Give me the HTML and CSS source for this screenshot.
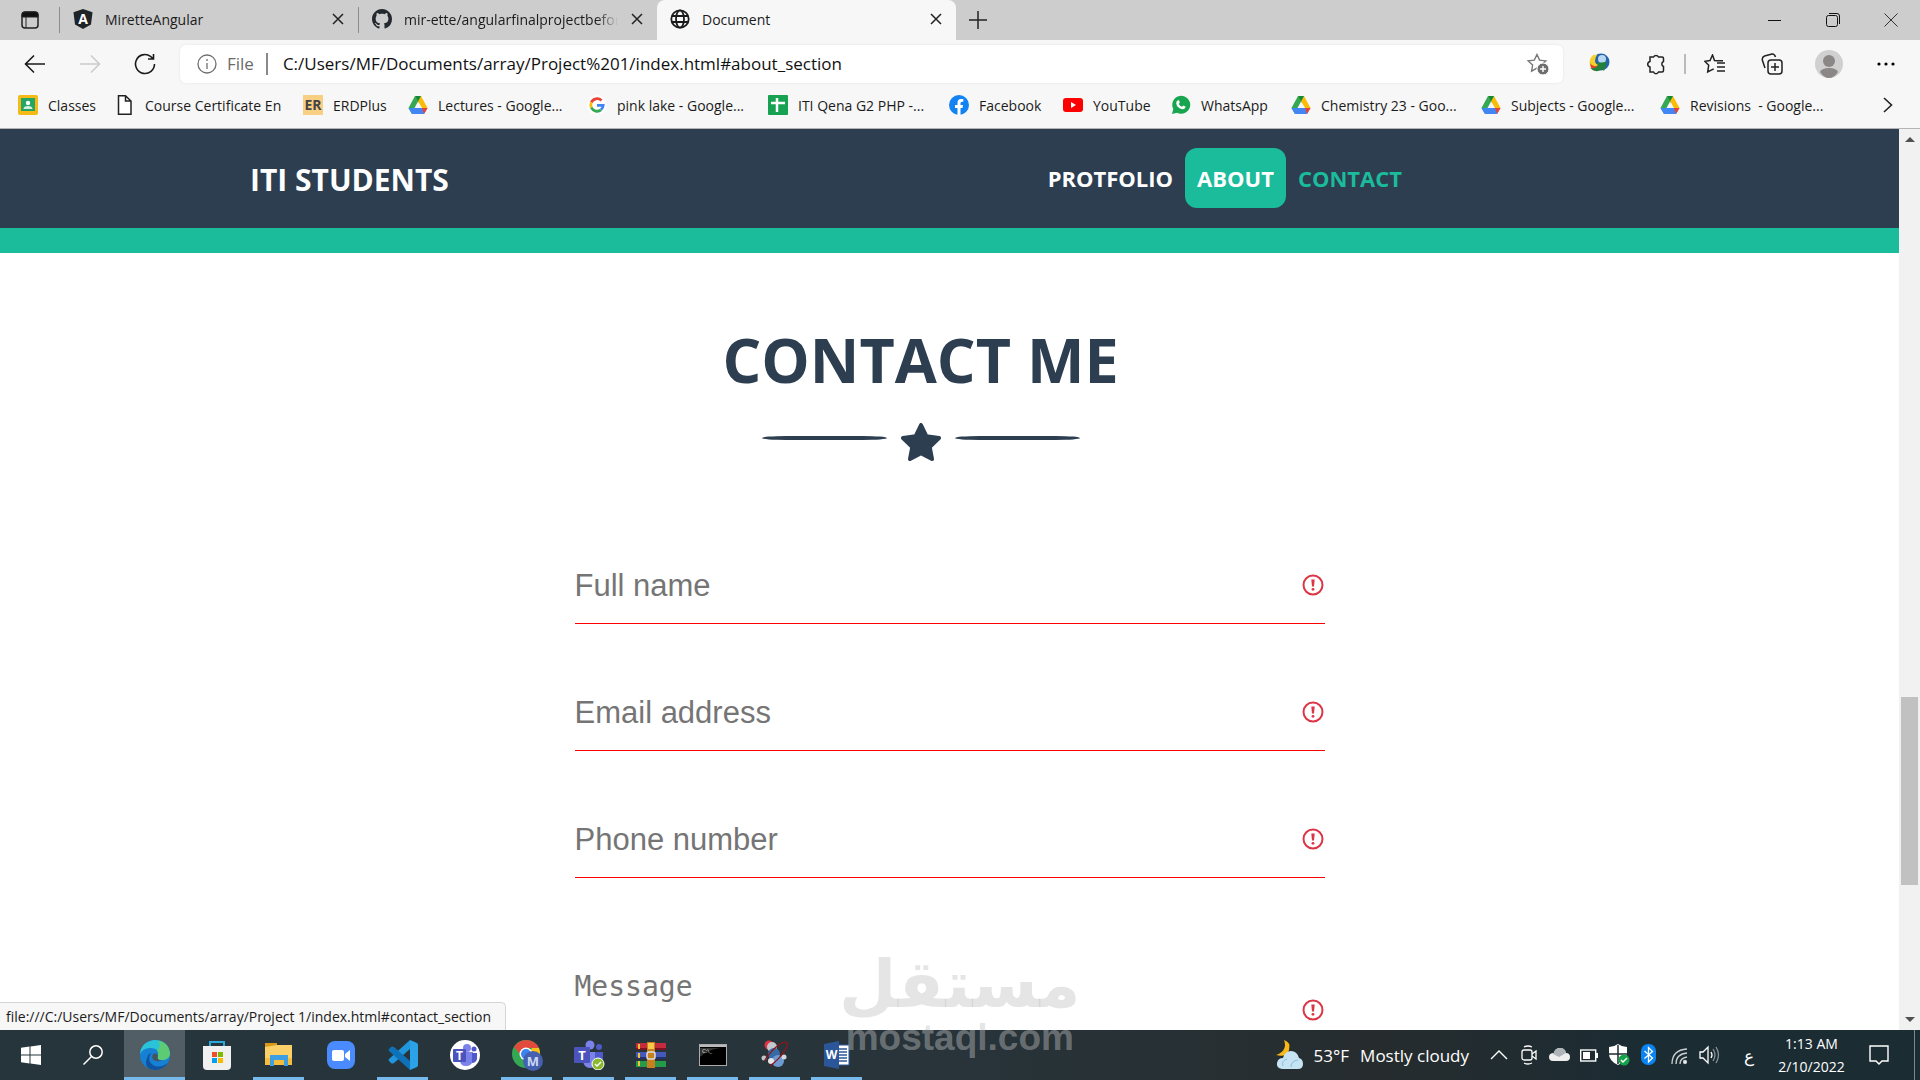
FILE: index.html
```html
<!DOCTYPE html>
<html lang="en">
<head>
  <meta charset="UTF-8" />
  <meta name="viewport" content="width=device-width, initial-scale=1.0"/>
  <title>Document</title>
  <link rel="stylesheet" href="styles.css">
</head>
<body>
  <svg class="defs" aria-hidden="true">
    <symbol id="drive" viewBox="0 0 20 20">
      <path fill="#34a853" d="M7 1h3l2 4-7 13-1 1L.500 13z"/>
      <path fill="#fbbc04" d="M7 1h6l6.500 12H14z"/>
      <path fill="#4285f4" d="M.500 13l3.500 6h12l3.500-6z"/>
      <path fill="#ea4335" d="M14 13h5.500L16 19z"/>
      <path fill="#0f8a3c" d="M7 1h6l-3 5.500z"/>
      <path fill="#f7f7f7" d="M10 6.500l3.500 6.500h-7z"/>
    </symbol>
    <symbol id="alert" viewBox="0 0 22 22">
      <circle cx="11" cy="11" r="9.500" fill="none" stroke="#dc3545" stroke-width="2"/>
      <path d="M9.300 5.500h3.400L12 12.500h-2z" fill="#dc3545"/>
      <circle cx="11" cy="15.300" r="1.400" fill="#dc3545"/>
    </symbol>
    <symbol id="x" viewBox="0 0 12 12">
      <path d="M1 1l10 10M11 1L1 11" fill="none" stroke="#222" stroke-width="1.500"/>
    </symbol>
  </svg>

  <!-- tabs -->
  <div class="tab-strip">
    <button class="tab-actions" aria-label="Tab actions">
      <svg width="18" height="18" viewBox="0 0 18 18"><rect x="1" y="1" width="16" height="16" rx="3" fill="none" stroke="#222" stroke-width="1.500"/><path d="M1 6V4a3 3 0 0 1 3-3h10a3 3 0 0 1 3 3v2zM5 6v11" stroke="#222" fill="#111"/></svg>
    </button>
    <div class="tab">
      <svg width="20" height="20" viewBox="0 0 20 20"><path d="M10 0l9.500 3.300L18 15.500 10 20l-8-4.500L.500 3.300z" fill="#1e2428"/><text class="logo-letter" x="10" y="15" font-size="14">A</text></svg>
      <span class="tab-title">MiretteAngular</span>
      <button class="tab-close" aria-label="Close tab"><svg width="12" height="12"><use href="#x"/></svg></button>
    </div>
    <div class="tab">
      <svg width="20" height="20" viewBox="0 0 16 16"><path fill="#24292f" d="M8 0C3.580 0 0 3.580 0 8c0 3.540 2.290 6.530 5.470 7.590.4.070.550-.170.550-.380 0-.190-.010-.820-.010-1.490-2.010.370-2.530-.490-2.690-.940-.090-.230-.480-.940-.820-1.130-.280-.150-.680-.520-.010-.530.630-.010 1.080.580 1.230.820.720 1.210 1.870.870 2.330.660.070-.520.280-.870.510-1.070-1.780-.200-3.640-.890-3.640-3.950 0-.870.310-1.590.820-2.150-.080-.200-.360-1.020.080-2.120 0 0 .670-.210 2.200.820.640-.180 1.320-.270 2-.270s1.360.090 2 .270c1.530-1.040 2.200-.820 2.200-.820.440 1.100.160 1.920.080 2.120.510.560.820 1.270.820 2.150 0 3.070-1.870 3.750-3.650 3.950.290.250.540.730.540 1.480 0 1.070-.010 1.930-.010 2.200 0 .210.150.460.550.380A8.010 8.010 0 0 0 16 8c0-4.420-3.580-8-8-8z"/></svg>
      <span class="tab-title fade">mir-ette/angularfinalprojectbefore</span>
      <button class="tab-close" aria-label="Close tab"><svg width="12" height="12"><use href="#x"/></svg></button>
    </div>
    <div class="tab active">
      <svg width="20" height="20" viewBox="0 0 20 20" fill="none" stroke="#1b1b1b" stroke-width="1.800"><circle cx="10" cy="10" r="8.700"/><ellipse cx="10" cy="10" rx="4" ry="8.700"/><path d="M2 7h16M2 13h16"/></svg>
      <span class="tab-title">Document</span>
      <button class="tab-close" aria-label="Close tab"><svg width="12" height="12"><use href="#x"/></svg></button>
    </div>
    <button class="new-tab" aria-label="New tab"><svg width="18" height="18" viewBox="0 0 18 18"><path d="M9 0v18M0 9h18" stroke="#222" stroke-width="1.500"/></svg></button>
    <div class="window-buttons">
      <button aria-label="Minimize"><svg width="14" height="14" viewBox="0 0 14 14"><path d="M0 7.500h13" stroke="#111"/></svg></button>
      <button aria-label="Restore"><svg width="14" height="14" viewBox="0 0 14 14" fill="none" stroke="#111"><rect x=".5" y="2.500" width="11" height="11" rx="2"/><path d="M3 .5h8a2.500 2.500 0 0 1 2.500 2.500v8"/></svg></button>
      <button aria-label="Close"><svg width="14" height="14" viewBox="0 0 14 14"><path d="M.5.5l13 13M13.500.5l-13 13" stroke="#333"/></svg></button>
    </div>
  </div>

  <!-- address bar -->
  <div class="toolbar">
    <button class="tool" aria-label="Back"><svg width="22" height="20" viewBox="0 0 22 20" fill="none" stroke="#1b1b1b" stroke-width="1.600"><path d="M21 10H2M10 1.500L1.500 10l8.500 8.500"/></svg></button>
    <button class="tool" aria-label="Forward"><svg width="22" height="20" viewBox="0 0 22 20" fill="none" stroke="#ccc" stroke-width="1.600"><path d="M1 10h19M12 1.500l8.500 8.500-8.500 8.500"/></svg></button>
    <button class="tool" aria-label="Refresh"><svg width="22" height="22" viewBox="0 0 22 22" fill="none" stroke="#1b1b1b" stroke-width="1.600"><path d="M20.500 11a9.500 9.500 0 1 1-4-7.700l2.500 2.200M19.500 1v5h-5.500"/></svg></button>
    <div class="address">
      <svg width="20" height="20" viewBox="0 0 20 20" fill="none" stroke="#707070" stroke-width="1.300"><circle cx="10" cy="10" r="9"/><path d="M10 9v6M10 5v2"/></svg>
      <span class="scheme">File</span>
      <input type="text" class="url" aria-label="Address" value="C:/Users/MF/Documents/array/Project%201/index.html#about_section">
      <svg width="22" height="22" viewBox="0 0 22 22"><path d="M10 1.500l2.600 5.600 6.200.8-4.600 4.200 1 6-5.200-3-5.400 3 1-6.100L1.200 7.900l6.100-.8z" fill="none" stroke="#777" stroke-width="1.400"/><circle cx="16" cy="16" r="6" fill="#6e6e6e" stroke="#fff"/><path d="M16 13v6M13 16h6" stroke="#fff" stroke-width="1.400"/></svg>
    </div>
    <div class="tool-group">
      <button class="tool" aria-label="Download manager"><svg width="22" height="22" viewBox="0 0 22 22"><circle cx="13" cy="9" r="8.500" fill="#2563ad"/><circle cx="14" cy="6" r="4" fill="#b7d9ef"/><path d="M4 3Q-1 9 4 16q7 2 9-4-6 0-6-4 0-3 2-6-3-1-5 1z" fill="#f5d02f"/><path d="M2 10q3 5 9 2l-2 6q-6 1-7-8z" fill="#df4328"/><path d="M2 15q6 1 8-3l-2-2 11-1-3 9-2-2q-6 5-12-1z" fill="#22803a"/></svg></button>
      <button class="tool" aria-label="Extensions"><svg width="20" height="22" viewBox="0 0 20 22" fill="none" stroke="#222" stroke-width="1.500"><path d="M4 4h3.500a2.800 2.800 0 0 1 5 0H16q1.500 0 1.500 1.500v3a2.700 2.700 0 0 0 0 5v4q0 1.500-1.500 1.500h-3.500a2.700 2.700 0 0 1-5 0H4v-5a2.800 2.800 0 0 1 0-5.500z"/></svg></button>
      <span class="divider"></span>
      <button class="tool" aria-label="Favorites"><svg width="22" height="20" viewBox="0 0 22 20" fill="none" stroke="#222" stroke-width="1.500"><path d="M13 6.800l-2.500-.3L8.500 1 6 6.500.8 7.300l3.900 4-1 6.700 6-3.200M13 9h8M13 13h8M13 17h8M13 6.800h6"/></svg></button>
      <button class="tool" aria-label="Collections"><svg width="22" height="22" viewBox="0 0 22 22" fill="none" stroke="#222" stroke-width="1.500"><rect x="7" y="7" width="14" height="14" rx="3"/><path d="M14 10v8M10 14h8M4 15l-2.700-8Q1 4 3.500 3L11 1q2.500-.3 3.500 3"/></svg></button>
      <button class="tool" aria-label="Profile"><svg width="28" height="28" viewBox="0 0 28 28"><circle cx="14" cy="14" r="14" fill="#cfd0cf"/><circle cx="14" cy="11" r="6" fill="#8b8786"/><path d="M5 22q2-4 9-4t9 4q-4 6-9 6t-9-6z" fill="#8b8786"/></svg></button>
      <button class="tool" aria-label="Settings and more"><svg width="18" height="4" viewBox="0 0 18 4"><circle cx="2" cy="2" r="1.600"/><circle cx="9" cy="2" r="1.600"/><circle cx="16" cy="2" r="1.600"/></svg></button>
    </div>
  </div>

  <!-- bookmarks -->
  <nav class="bookmarks" aria-label="Bookmarks">
    <a href="#"><svg width="20" height="20" viewBox="0 0 20 20"><rect width="20" height="20" rx="2" fill="#f5ba15"/><rect x="3" y="3" width="14" height="13" fill="#23a566"/><circle cx="10" cy="8" r="2.200" fill="#fff"/><path d="M5.500 14q0-3 4.500-3t4.500 3z" fill="#d8f0e0"/></svg>Classes</a>
    <a href="#"><svg width="20" height="20" viewBox="0 0 20 20"><path d="M3.500.8h7L16 6v13.200H3.500zM10.500.8V6H16" fill="#fff" stroke="#222" stroke-width="1.500"/></svg>Course Certificate En</a>
    <a href="#"><span class="erd">ER</span>ERDPlus</a>
    <a href="#"><svg width="20" height="20"><use href="#drive"/></svg>Lectures - Google...</a>
    <a href="#"><svg width="20" height="20" viewBox="0 0 20 20" fill="none" stroke-width="2.800"><circle cx="10" cy="10" r="10" fill="#fff"/><path d="M14.500 5.500A6.300 6.300 0 0 0 4.300 7.500" stroke="#ea4335"/><path d="M4.300 7.500a6.300 6.300 0 0 0 0 5" stroke="#fbbc04"/><path d="M4.300 12.500a6.300 6.300 0 0 0 9.700 2.300" stroke="#34a853"/><path d="M14 14.800a6.300 6.300 0 0 0 2.200-4.500H10" stroke="#4285f4"/></svg>pink lake - Google...</a>
    <a href="#"><svg width="20" height="20" viewBox="0 0 20 20"><rect width="20" height="20" rx="1" fill="#16a251"/><path d="M9 3v14M3 8h14" stroke="#fff" stroke-width="2.500"/></svg>ITI Qena G2 PHP -...</a>
    <a href="#"><svg width="20" height="20" viewBox="0 0 20 20"><circle cx="10" cy="10" r="10" fill="#1283f0"/><path d="M8.500 20v-7H6v-3h2.500V8Q8.500 4 12 4h2.300v2.700H13q-1.500 0-1.500 1.500V10H14l-.5 3h-2v7z" fill="#fff"/></svg>Facebook</a>
    <a href="#"><svg width="20" height="20" viewBox="0 0 20 20"><rect y="3" width="20" height="14" rx="3" fill="#f00"/><path d="M8 7l5 3-5 3z" fill="#fff"/></svg>YouTube</a>
    <a href="#"><svg width="20" height="20" viewBox="0 0 20 20"><path d="M1 19l1.300-5A9 9 0 1 1 6 17.700z" fill="#17a550"/><path d="M6.500 5.500q1.500-1 2 1l.3 1-1 1.500q1 2 3.200 2.800l1.300-1.200 2.200 1q0 2.600-3 2.600-5.500-1-6.300-6 0-1.700 1.300-2.700z" fill="#fff"/></svg>WhatsApp</a>
    <a href="#"><svg width="20" height="20"><use href="#drive"/></svg>Chemistry 23 - Goo...</a>
    <a href="#"><svg width="20" height="20"><use href="#drive"/></svg>Subjects - Google...</a>
    <a href="#"><svg width="20" height="20"><use href="#drive"/></svg>Revisions &nbsp;- Google...</a>
    <button class="more" aria-label="More bookmarks"><svg width="10" height="16" viewBox="0 0 10 16"><path d="M1 1l7.500 7L1 15" fill="none" stroke="#222" stroke-width="1.600"/></svg></button>
  </nav>

  <!-- page -->
  <div class="viewport">
    <div class="page">
      <header class="site-header">
        <a class="brand" href="#">ITI STUDENTS</a>
        <nav class="site-nav">
          <a href="#portfolio_section">PROTFOLIO</a>
          <a class="current" href="#about_section">ABOUT</a>
          <a class="hovered" href="#contact_section">CONTACT</a>
        </nav>
      </header>

      <section class="contact" id="contact_section">
        <h1>CONTACT ME</h1>
        <div class="star-line">
          <span class="line"></span>
          <svg width="40" height="38" viewBox="0 0 40 38"><path d="M20 2l5.300 11.200L38 15l-9.300 9 2.300 12-11-5.800L9 36l2.300-12L2 15l12.700-1.800z" fill="#2c3e50" stroke="#2c3e50" stroke-width="4" stroke-linejoin="round"/></svg>
          <span class="line"></span>
        </div>
        <form class="contact-form">
          <label class="field">
            <span class="sr-only">Full name</span>
            <input type="text" placeholder="Full name">
            <svg class="alert" width="22" height="22"><use href="#alert"/></svg>
          </label>
          <label class="field">
            <span class="sr-only">Email address</span>
            <input type="email" placeholder="Email address">
            <svg class="alert" width="22" height="22"><use href="#alert"/></svg>
          </label>
          <label class="field">
            <span class="sr-only">Phone number</span>
            <input type="tel" placeholder="Phone number">
            <svg class="alert" width="22" height="22"><use href="#alert"/></svg>
          </label>
          <label class="field">
            <span class="sr-only">Message</span>
            <textarea placeholder="Message"></textarea>
            <svg class="alert" width="22" height="22"><use href="#alert"/></svg>
          </label>
        </form>
      </section>
    </div>
    <div class="scrollbar">
      <svg width="10" height="5" viewBox="0 0 10 5"><path d="M0 5l5-5 5 5z" fill="#505050"/></svg>
      <div class="track"><div class="thumb"></div></div>
      <svg width="10" height="5" viewBox="0 0 10 5"><path d="M0 0l5 5 5-5z" fill="#505050"/></svg>
    </div>
    <div class="status">file:///C:/Users/MF/Documents/array/Project 1/index.html#contact_section</div>
  </div>

  <!-- taskbar -->
  <footer class="taskbar">
    <button class="app" aria-label="Start"><svg width="20" height="20" viewBox="0 0 20 20" fill="#fff"><path d="M0 2.800l8.500-1.200v8H0zM9.500 1.400L20 0v9.600H9.500zM0 10.500h8.500v8L0 17.300zM9.500 10.500H20V20L9.500 18.600z"/></svg></button>
    <button class="app" aria-label="Search"><svg width="20" height="20" viewBox="0 0 20 20" fill="none" stroke="#fff" stroke-width="1.500"><circle cx="13" cy="7" r="6.200"/><path d="M8.500 11.500L.5 19.500"/></svg></button>
    <button class="app focused" aria-label="Edge"><svg width="30" height="30" viewBox="0 0 30 30"><circle cx="15" cy="15" r="15" fill="#1580d4"/><path d="M0 14Q1 2 14 0q14 0 16 13 0 7-8 7-6 0-4-4 2-8-8-8Q3 8 0 14z" fill="#2bc3d8"/><path d="M18 .5Q29 3 30 13q0 7-8 7-6 0-4-4 1-3-1-6 5-3 1-9.500z" fill="#5ccb73"/><path d="M11 13q-5 9 4 13 6 2 13-3-5 7-13 7Q3 29 7 18q1-4 4-5z" fill="#10539f"/><path d="M18 16q-2 4 4 4.500-6 2-9-1-2-4 1-6 3-1 4 2.500z" fill="#47545c"/></svg></button>
    <button class="app" aria-label="Store"><svg width="30" height="30" viewBox="0 0 30 30"><path d="M8 7V2h14v5" fill="none" stroke="#28a8dc" stroke-width="2"/><path d="M1 6h28v20q0 4-4 4H5q-4 0-4-4z" fill="#f0f0f0"/><path d="M10 12h5v5h-5z" fill="#ef4e2b"/><path d="M16 12h5v5h-5z" fill="#7fb900"/><path d="M10 18h5v5h-5z" fill="#00a2ed"/><path d="M16 18h5v5h-5z" fill="#fbb800"/></svg></button>
    <button class="app open" aria-label="File Explorer"><svg width="30" height="30" viewBox="0 0 30 30"><path d="M1 3h12v5H1z" fill="#d99a17"/><path d="M1 7l12-2h15v20H1z" fill="#fbd069"/><path d="M1 18h27v7H1z" fill="#f5bd3b"/><path d="M6 26V15h18v11h-4v-6H10v6z" fill="#3d9ee2"/></svg></button>
    <button class="app" aria-label="Zoom"><svg width="30" height="30" viewBox="0 0 30 30"><rect x="1" y="1" width="28" height="28" rx="8" fill="#4a8cff"/><rect x="6" y="10" width="12" height="11" rx="2" fill="#fff"/><path d="M19 14l5-4v11l-5-4z" fill="#fff"/></svg></button>
    <button class="app open" aria-label="Visual Studio Code"><svg width="30" height="30" viewBox="0 0 30 30"><path d="M22 0L1 19q-1 1 0 2l2 2q1 1 3 0L22 9z" fill="#2196dc"/><path d="M22 30L1 11q-1-1 0-2l2-2q1-1 3 0l16 14z" fill="#0f72b8"/><path d="M22 0l7 3q1 1 1 2v20q0 1-1 2l-7 3z" fill="#2ba2e8"/></svg></button>
    <button class="app" aria-label="Teams"><svg width="30" height="30" viewBox="0 0 30 30"><circle cx="15" cy="15" r="15" fill="#fff"/><circle cx="17" cy="8" r="4" fill="#7b83eb"/><circle cx="24" cy="9" r="2.500" fill="#5059c9"/><path d="M11 12h12v8q-1 6-7 6t-6-6z" fill="#7b83eb"/><path d="M22 13h5v6q-1 4-5 4z" fill="#5059c9"/><rect x="3" y="9" width="13" height="13" rx="1" fill="#4b53bc"/><text class="logo-letter" x="9.500" y="20" font-size="12">T</text></svg></button>
    <button class="app open" aria-label="Chrome"><svg width="32" height="32" viewBox="0 0 32 32"><circle cx="15" cy="15" r="14" fill="#34a853"/><path d="M3 8Q8 1 15 1q9 0 13 8H15q-5 0-6 6z" fill="#e24a3b"/><path d="M28 9q4 12-7 19l-6-8 6-11z" fill="#fbc116"/><circle cx="15" cy="15" r="6.500" fill="#fff"/><circle cx="15" cy="15" r="5" fill="#3d83ef"/><circle cx="22" cy="22" r="10" fill="#4460ae"/><text class="logo-letter soft" x="22" y="27" font-size="13">M</text></svg></button>
    <button class="app open" aria-label="Teams for work"><svg width="32" height="30" viewBox="0 0 32 30"><circle cx="17" cy="5" r="4.500" fill="#7b83eb"/><circle cx="26" cy="7" r="3" fill="#5059c9"/><path d="M10 12h14v9q-1 7-7 7t-7-7z" fill="#7b83eb"/><path d="M22 12h8v8q-2 6-8 5z" fill="#5059c9"/><rect x="1" y="7" width="16" height="16" rx="1" fill="#4b53bc"/><text class="logo-letter" x="9" y="20" font-size="13">T</text><circle cx="25" cy="24" r="6" fill="#8ab92d" stroke="#fff"/><path d="M22 24l2 2 4-4" fill="none" stroke="#fff" stroke-width="1.500"/></svg></button>
    <button class="app open" aria-label="WinRAR"><svg width="30" height="28" viewBox="0 0 30 28"><path d="M0 2h30v7H0z" fill="#c42b3d"/><path d="M0 11h30v7H0z" fill="#4658b8"/><path d="M0 20h30v6H0z" fill="#259a48"/><path d="M0 7h30v2H0z" fill="#7c1322"/><path d="M0 16h30v2H0z" fill="#24316f"/><path d="M11 1h8v26h-8z" fill="#c8801e"/><path d="M12 2h6v6h-6z" fill="#f7c948"/><path d="M2 3h2v5H2zM2 12h2v5H2zM2 20h2v5H2z" fill="#eec43b"/><rect x="11" y="11" width="8" height="7" rx="2" fill="none" stroke="#ddd" stroke-width="1.500"/></svg></button>
    <button class="app open" aria-label="Command Prompt"><svg width="28" height="22" viewBox="0 0 28 22"><rect x=".5" y=".5" width="27" height="21" fill="#000" stroke="#aaa"/><path d="M1 1h26v2H1z" fill="#bbb"/><path d="M1 4h20Q8 6 1 13z" fill="#333"/><text x="3" y="9" font-size="6" fill="#ddd">C:\_</text></svg></button>
    <button class="app open" aria-label="Chemistry viewer"><svg width="30" height="30" viewBox="0 0 30 30"><circle cx="9" cy="5" r="4.500" fill="#df3343"/><circle cx="12" cy="7" r="5" fill="#c3c8ce"/><circle cx="14" cy="14" r="6" fill="#3769a5"/><circle cx="18" cy="21" r="6" fill="#6d9bd1"/><circle cx="4" cy="18" r="2.500" fill="#bfc5cb"/><circle cx="24" cy="17" r="2.500" fill="#d4d7dc"/><circle cx="11" cy="21" r="3" fill="#e5e7ea"/><ellipse cx="15" cy="15" rx="17" ry="5" transform="rotate(-47 15 15)" fill="none" stroke="#8f1419" stroke-width="1.300" stroke-dasharray="30 14"/></svg></button>
    <button class="app open" aria-label="Word"><svg width="28" height="28" viewBox="0 0 28 28"><path d="M14 4h12v20H14z" fill="#fff" stroke="#2b579a"/><path d="M16 8h8M16 11h8M16 14h8M16 17h8M16 20h8" stroke="#2b579a" stroke-width="1.500"/><path d="M1 3l15-3v28L1 25z" fill="#2b579a"/><text class="logo-letter" x="8.500" y="18" font-size="12">W</text></svg></button>

    <div class="tray">
      <button class="weather">
        <svg width="28" height="30" viewBox="0 0 28 30"><path d="M9 0q7 2 5 10T1 15q6-2 8-6t0-9z" fill="#fbb917"/><path d="M7 29q-6-1-5-6t6-5q2-7 8-7t8 7q4 1 4 6t-5 5z" fill="#c5e3f2"/><path d="M8 26q-2-5 4-7M16 27q0-6 7-7" fill="none" stroke="#89bfdc"/></svg>
        <span>53°F</span><span>Mostly cloudy</span>
      </button>
      <svg width="30" height="22" viewBox="-7 -4 30 22"><path d="M0 11l8-8 8 8" fill="none" stroke="#fff" stroke-width="1.400"/></svg>
      <svg width="30" height="22" viewBox="-7 -2 30 22" fill="none" stroke="#fff" stroke-width="1.300"><rect x="1" y="4" width="10" height="10" rx="2"/><path d="M11 8l4-3v8l-4-3M3 1q4-2 8 0M3 17q4 2 8 0"/></svg>
      <svg width="30" height="22" viewBox="-5 -3 30 22"><path d="M4 14q-4 0-4-4t5-4q1-5 6-5t6 5q4 0 4 4t-4 4z" fill="#eee"/><path d="M4 7q2-6 7-6t6 5l-7 4z" fill="#aeb4b8"/></svg>
      <svg width="30" height="22" viewBox="-6 -5 30 22"><rect x=".7" y="1" width="15" height="11" fill="none" stroke="#fff" stroke-width="1.400"/><path d="M3 3h7v7H3zM16 4h2v5h-2z" fill="#fff"/></svg>
      <svg width="30" height="22" viewBox="-5 0 30 22"><path d="M9 0q4 3 9 3v7q0 7-9 11-9-4-9-11V3q5 0 9-3z" fill="#fff"/><path d="M9 1v19M0 10h18" stroke="#1d2b31" stroke-width="1.500"/><circle cx="15" cy="16" r="5.500" fill="#15a34a"/><path d="M12 16l2 2 4-4" fill="none" stroke="#fff" stroke-width="1.500"/></svg>
      <svg width="30" height="22" viewBox="-7 0 30 22"><rect x="0" y="0" width="15" height="21" rx="7" fill="#0a84f0"/><path d="M3.500 7l8 7-4 4V3.500l4 4-8 7" fill="none" stroke="#fff" stroke-width="1.300"/></svg>
      <svg width="30" height="22" viewBox="-7 -3 30 22" fill="none" stroke="#ccd1d3" stroke-width="1.300"><path d="M1 17Q1 3 16 2M5 17Q5 7 16 6M9 17q0-6 7-7"/><circle cx="14" cy="15" r="1.500" fill="#fff"/></svg>
      <svg width="30" height="22" viewBox="-5 -2 30 22" fill="none" stroke="#fff" stroke-width="1.300"><path d="M1 6h3l5-5v16l-5-5H1z"/><path d="M12 6q2 3 0 6"/><path d="M14 3q4 6 0 12M17 1q5 8 0 16" stroke="#89949a"/></svg>
      <button class="lang">ع</button>
      <button class="clock"><span>1:13 AM</span><span>2/10/2022</span></button>
      <button class="notify" aria-label="Notifications"><svg width="20" height="20" viewBox="0 0 20 20"><path d="M1 1h18v15h-6l-3 3-3-3H1z" fill="none" stroke="#fff" stroke-width="1.400"/></svg></button>
    </div>
  </footer>

  <div class="watermark" aria-hidden="true">
    <span class="wm-ar" lang="ar">مستقل</span>
    <span class="wm-en">mostaql.com</span>
  </div>
</body>
</html>
```
FILE: styles.css
```css
* { box-sizing: border-box; margin: 0; padding: 0; }
body {
  font-family: 'Segoe UI', 'Open Sans', 'Noto Sans', sans-serif;
  font-size: 14px;
  color: #1b1b1b;
  background: #fff;
  height: 100vh;
  display: flex;
  flex-direction: column;
  overflow: hidden;
  position: relative;
}
button {
  border: none;
  background: none;
  font: inherit;
  color: inherit;
  display: flex;
  align-items: center;
  justify-content: center;
  flex-shrink: 0;
}
a { text-decoration: none; color: inherit; }
svg { flex-shrink: 0; }
.defs { position: absolute; width: 0; height: 0; }
.logo-letter {
  fill: #fff;
  font-weight: bold;
  text-anchor: middle;
}
.logo-letter.soft { fill: #cbd8f5; }
.sr-only {
  position: absolute;
  width: 1px;
  height: 1px;
  overflow: hidden;
  clip-path: inset(50%);
}

/* tabs */
.tab-strip {
  display: flex;
  height: 40px;
  flex-shrink: 0;
  background: #cdcdcd;
}
.tab-actions { width: 59px; }
.tab {
  display: flex;
  align-items: center;
  width: 299px;
  padding: 0 13px 2px;
  gap: 12px;
  border-left: 1px solid #8d8d8d;
  border-image: linear-gradient(transparent 20%, #8d8d8d 20%, #8d8d8d 80%, transparent 80%) 1;
}
.tab-title {
  flex: 1;
  white-space: nowrap;
  overflow: hidden;
}
.tab-title.fade {
  mask-image: linear-gradient(90deg, #000 90%, transparent);
}
.tab-close { width: 14px; height: 20px; }
.tab.active {
  background: #f7f7f7;
  border: none;
  border-radius: 8px 8px 0 0;
}
.new-tab { width: 44px; }
.window-buttons {
  margin-left: auto;
  display: flex;
}
.window-buttons button { width: 58px; }

/* toolbar */
.toolbar {
  display: flex;
  align-items: center;
  height: 47px;
  flex-shrink: 0;
  padding: 0 6px 0 7px;
  background: #f7f7f7;
}
.tool { width: 55px; height: 38px; }
.tool-group {
  display: flex;
  align-items: center;
}
.tool-group .tool { width: 57px; }
.address {
  flex: 1;
  height: 38px;
  margin: 0 7px 0 8px;
  padding: 0 14px 0 17px;
  display: flex;
  align-items: center;
  background: #fff;
  border-radius: 6px;
  box-shadow: 0 0 3px rgba(0,0,0,0.08);
  font-size: 17px;
}
.scheme {
  color: #6b6b6b;
  margin: 0 12px 0 10px;
}
.url {
  flex: 1;
  height: 22px;
  border: none;
  border-left: 2px solid #8a8a8a;
  padding-left: 15px;
  outline: none;
  font: inherit;
  color: #111;
}
.divider {
  width: 2px;
  height: 20px;
  background: #bbb;
}

/* bookmarks */
.bookmarks {
  display: grid;
  grid-template-columns: 97px 188px 105px 179px 181px 181px 114px 108px 120px 190px 179px 1fr 64px;
  align-items: center;
  height: 42px;
  flex-shrink: 0;
  padding: 0 0 5px 18px;
  background: #f7f7f7;
  border-bottom: 1px solid #b5b5b5;
}
.bookmarks a {
  display: flex;
  align-items: center;
  gap: 10px;
  white-space: nowrap;
}
.erd {
  width: 20px;
  height: 20px;
  background: #f9cf83;
  color: #444;
  font-size: 14px;
  line-height: 20px;
  font-weight: bold;
  text-align: center;
}

/* page */
.viewport {
  flex: 1;
  min-height: 0;
  display: flex;
  position: relative;
}
.page {
  flex: 1;
  overflow: hidden;
}
.site-header {
  display: flex;
  align-items: center;
  justify-content: space-between;
  height: 124px;
  padding: 0 485px 2px 250px;
  background: #2c3e50;
  border-bottom: 25px solid #1abc9c;
  color: #fff;
  font-weight: bold;
}
.brand { font-size: 30px; padding-top: 4px; }
.site-nav {
  display: flex;
  font-size: 22px;
}
.site-nav a {
  padding: 0 12px;
  line-height: 60px;
  border-radius: 12px;
}
.site-nav .current { background: #1abc9c; }
.site-nav .hovered { color: #1abc9c; }

.contact { padding-top: 67px; }
.contact h1 {
  margin-right: 58px;
  text-align: center;
  font-size: 61px;
  line-height: 80px;
  color: #2c3e50;
}
.star-line {
  display: flex;
  align-items: center;
  justify-content: center;
  gap: 14px;
  margin: 15px 57px 86px 0;
}
.star-line svg { margin-top: 8px; }
.line {
  width: 125px;
  height: 4px;
  background: #2c3e50;
  border-radius: 24px / 2px;
}
.contact-form {
  width: 750px;
  margin: 0 auto;
  display: flex;
  flex-direction: column;
  gap: 50px;
}
.field {
  display: flex;
  align-items: center;
  border-bottom: 1px solid #f00;
}
.field input, .field textarea {
  flex: 1;
  height: 76px;
  padding-top: 2px;
  border: none;
  outline: none;
  resize: none;
  background: none;
  font-family: 'Liberation Sans', Arial, sans-serif;
  font-size: 31px;
  color: #333;
}
.field textarea {
  height: 164px;
  padding-top: 42px;
  font-family: Consolas, 'DejaVu Sans Mono', monospace;
  font-size: 28px;
}
.field ::placeholder { color: #757575; }
.alert { margin-right: 1px; }

.scrollbar {
  width: 21px;
  background: #f1f1f1;
  display: flex;
  flex-direction: column;
  align-items: center;
  padding: 8px 0;
}
.track {
  flex: 1;
  width: 17px;
}
.thumb {
  height: 188px;
  margin-top: 555px;
  background: #c1c1c1;
}
.status {
  position: absolute;
  left: 0;
  bottom: 0;
  height: 28px;
  padding: 0 14px 0 6px;
  line-height: 27px;
  background: #f7f7f7;
  border: 1px solid #d5d5d5;
  border-width: 1px 1px 0 0;
  border-radius: 0 5px 0 0;
}

/* taskbar */
.taskbar {
  height: 50px;
  flex-shrink: 0;
  display: flex;
  background: linear-gradient(90deg, #26353c, #28343a 50%, #262c2e 72%, #1c2c33 85%);
  color: #fff;
}
.app {
  width: 61px;
  margin-right: 1px;
}
.app.focused {
  background: #515e65;
  box-shadow: inset 0 -3px #76b9ed;
}
.app.open {
  background: linear-gradient(#76b9ed, #76b9ed) bottom / 51px 3px no-repeat;
}
.tray {
  margin-left: auto;
  display: flex;
  align-items: center;
  border-right: 1px solid #7c868b;
  padding-right: 5px;
  margin-right: 5px;
}
.weather {
  font-size: 17px;
  gap: 11px;
  margin-right: 15px;
}
.lang { width: 50px; font-size: 17px; }
.clock {
  flex-direction: column;
  width: 75px;
  line-height: 23px;
}
.notify { width: 60px; height: 50px; }

.watermark {
  position: absolute;
  left: 44%;
  bottom: 22px;
  width: 230px;
  display: flex;
  flex-direction: column;
  align-items: center;
  font-weight: bold;
  color: rgba(195,195,195,0.43);
  pointer-events: none;
}
.wm-ar {
  font-family: 'DejaVu Sans', sans-serif;
  font-size: 66px;
  line-height: 66px;
}
.wm-en {
  font-family: 'Liberation Sans', Arial, sans-serif;
  font-size: 37px;
  line-height: 40px;
}
```
